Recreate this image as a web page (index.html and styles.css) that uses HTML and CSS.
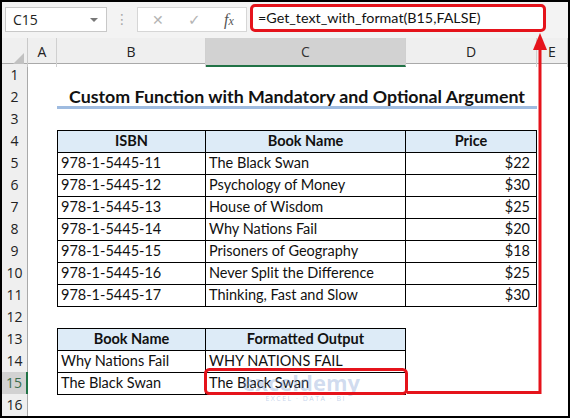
FILE: index.html
```html
<!DOCTYPE html>
<html>
<head>
<meta charset="utf-8">
<link rel="stylesheet" href="styles.css">
</head>
<body>
<div class="frame">
  <div class="toolbar">
    <div class="namebox"><span>C15</span><span class="dd"></span></div>
    <div class="sep">⋮</div>
    <div class="fbtns">
      <span class="ic x">✕</span>
      <span class="ic ok">✓</span>
      <span class="ic fx">f<span class="fxs">x</span></span>
    </div>
    <div class="fbar">=Get_text_with_format(B15,FALSE)</div>
  </div>
  <div class="sheet">
    <div class="row colhead">
      <div class="corner"><span class="tri"></span></div>
      <div class="ch">A</div><div class="ch">B</div><div class="ch sel">C</div><div class="ch">D</div><div class="ch">E</div>
    </div>
    <div class="row"><div class="rh">1</div></div>
    <div class="row"><div class="rh">2</div><div></div><div class="title">Custom Function with Mandatory and Optional Argument</div></div>
    <div class="row"><div class="rh">3</div></div>
    <div class="row"><div class="rh">4</div><div></div><div class="c h bt bl">ISBN</div><div class="c h bt">Book Name</div><div class="c h bt">Price</div></div>
    <div class="row"><div class="rh">5</div><div></div><div class="c bl">978-1-5445-11</div><div class="c">The Black Swan</div><div class="c r">$22</div></div>
    <div class="row"><div class="rh">6</div><div></div><div class="c bl">978-1-5445-12</div><div class="c">Psychology of Money</div><div class="c r">$30</div></div>
    <div class="row"><div class="rh">7</div><div></div><div class="c bl">978-1-5445-13</div><div class="c">House of Wisdom</div><div class="c r">$25</div></div>
    <div class="row"><div class="rh">8</div><div></div><div class="c bl">978-1-5445-14</div><div class="c">Why Nations Fail</div><div class="c r">$20</div></div>
    <div class="row"><div class="rh">9</div><div></div><div class="c bl">978-1-5445-15</div><div class="c">Prisoners of Geography</div><div class="c r">$18</div></div>
    <div class="row"><div class="rh">10</div><div></div><div class="c bl">978-1-5445-16</div><div class="c">Never Split the Difference</div><div class="c r">$25</div></div>
    <div class="row"><div class="rh">11</div><div></div><div class="c bl">978-1-5445-17</div><div class="c">Thinking, Fast and Slow</div><div class="c r">$30</div></div>
    <div class="row"><div class="rh">12</div></div>
    <div class="row"><div class="rh">13</div><div></div><div class="c h bt bl">Book Name</div><div class="c h bt">Formatted Output</div></div>
    <div class="row"><div class="rh">14</div><div></div><div class="c bl">Why Nations Fail</div><div class="c">WHY NATIONS FAIL</div></div>
    <div class="row"><div class="rh rsel">15</div><div></div><div class="c bl">The Black Swan</div><div class="c">The Black Swan</div></div>
    <div class="row"><div class="rh">16</div></div>
  </div>
  <div class="wm">
    <div class="wm-main">exceldemy</div>
    <div class="wm-sub">EXCEL · DATA · BI</div>
  </div>
  <svg class="overlay" width="570" height="418" viewBox="0 0 570 418">
    <rect x="205.5" y="369.5" width="201" height="24" rx="4" fill="none" stroke="#e5131b" stroke-width="3"/>
    <path d="M407 392.5 H540 V48" fill="none" stroke="#e5131b" stroke-width="3"/>
    <polygon points="540,33 533,50 547,50" fill="#e5131b"/>
  </svg>
</div>
</body>
</html>
```
FILE: styles.css
```css
* { box-sizing: border-box; }
html, body { margin: 0; padding: 0; background: #fff; }
.frame {
  position: relative;
  width: 570px;
  height: 418px;
  border: 2px solid #000;
  overflow: hidden;
  font-family: "Lato", "Carlito", sans-serif;
}
.toolbar {
  display: flex;
  align-items: flex-start;
  height: 36px;
  background: #f3f3f3;
  padding-left: 3px;
}
.namebox {
  display: flex;
  align-items: center;
  justify-content: space-between;
  width: 102px;
  height: 25px;
  margin-top: 5px;
  background: #fff;
  border: 1px solid #c8c8c8;
  padding: 0 8px 0 7px;
  font-family: "Open Sans", sans-serif;
  font-size: 14px;
  color: #222;
}
.dd {
  width: 0; height: 0;
  border-left: 4px solid transparent;
  border-right: 4px solid transparent;
  border-top: 4px solid #777;
}
.sep {
  width: 30px;
  height: 25px;
  margin-top: 5px;
  text-align: center;
  line-height: 25px;
  color: #a8a8a8;
  font-size: 14px;
  font-family: "DejaVu Sans", sans-serif;
}
.fbtns {
  display: flex;
  align-items: center;
  width: 110px;
  height: 25px;
  margin-top: 5px;
  background: #fff;
  border: 1px solid #d6d6d6;
  padding-left: 14px;
}
.ic { color: #b4b4b4; font-family: "DejaVu Sans", sans-serif; }
.x { font-size: 14px; width: 36px; }
.ok { font-size: 15px; width: 36px; }
.fx {
  font-family: "Liberation Serif", serif;
  font-style: italic;
  font-size: 16px;
  color: #555;
}
.fxs { font-size: 12px; }
.fbar {
  width: 296px;
  height: 28px;
  margin-top: 2px;
  margin-left: 3px;
  background: #fff;
  border: 3px solid #e5131b;
  border-radius: 5px;
  padding-left: 5px;
  line-height: 22px;
  font-size: 14.3px;
  color: #111;
}
.sheet { display: flex; flex-direction: column; }
.row {
  display: grid;
  grid-template-columns: 26px 29px 149px 200px 131px 1fr;
  height: 22px;
}
.colhead {
  height: 26px;
  background: #efefef;
  border-bottom: 1px solid #a9a9a9;
}
.corner {
  position: relative;
  border-right: 1px solid #c9c9c9;
}
.tri {
  position: absolute;
  right: 3px;
  bottom: 3px;
  width: 0; height: 0;
  border-left: 11px solid transparent;
  border-bottom: 11px solid #c1c1c1;
}
.ch {
  border-right: 1px solid #d0d0d0;
  text-align: center;
  font-family: "Open Sans", sans-serif;
  font-size: 14px;
  line-height: 27px;
  color: #222;
}
.ch.sel {
  background: #d2d2d2;
  border-bottom: 2px solid #217346;
  color: #333;
}
.rh {
  background: #efefef;
  border-right: 1px solid #a9a9a9;
  border-bottom: 1px solid #dcdcdc;
  text-align: center;
  font-family: "Open Sans", sans-serif;
  font-size: 14px;
  line-height: 22px;
  color: #222;
}
.rh.rsel {
  background: #d2d2d2;
  border-right: 2px solid #217346;
  color: #3d6e4f;
}
.title {
  grid-column: 3 / 6;
  text-align: center;
  font-weight: 700;
  font-size: 17.8px;
  line-height: 20px;
  color: #111;
  border-bottom: 3px solid #9ebbe0;
}
.c {
  border-right: 1px solid #000;
  border-bottom: 1px solid #000;
  padding: 0 3px;
  font-size: 14.5px;
  line-height: 21px;
  color: #111;
  white-space: nowrap;
  overflow: hidden;
}
.c.bl { border-left: 1px solid #000; }
.c.bt { border-top: 1px solid #000; line-height: 20px; }
.c.h {
  background: #ddebf7;
  font-weight: 700;
  text-align: center;
}
.c.r { text-align: right; padding-right: 6px; }
.wm {
  position: absolute;
  left: 228px;
  top: 368px;
  width: 130px;
  text-align: right;
  pointer-events: none;
}
.wm-main {
  font-family: "Open Sans", sans-serif;
  font-weight: 700;
  font-size: 22px;
  line-height: 24px;
  color: rgba(110, 145, 205, 0.32);
}
.wm-sub {
  font-family: "Open Sans", sans-serif;
  font-size: 7px;
  letter-spacing: 1.5px;
  line-height: 9px;
  color: rgba(110, 145, 205, 0.4);
  padding-right: 14px;
}
.overlay {
  position: absolute;
  left: -2px;
  top: -2px;
  pointer-events: none;
}
```
